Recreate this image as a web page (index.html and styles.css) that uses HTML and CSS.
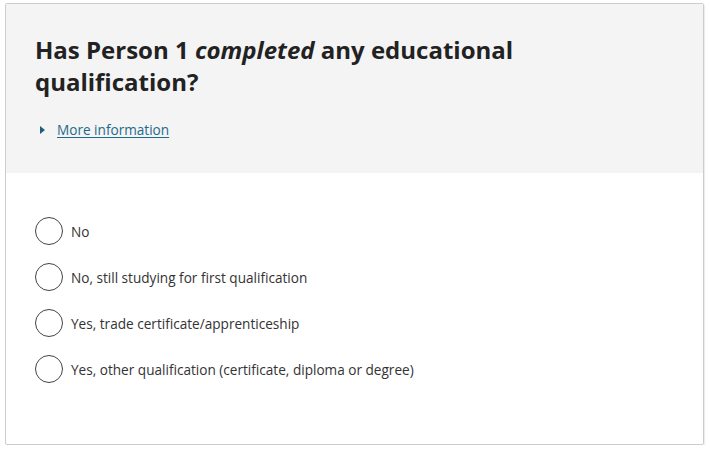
FILE: index.html
```html
<!DOCTYPE html>
<html>
<head>
<meta charset="utf-8">
<link rel="stylesheet" href="styles.css">
</head>
<body>
<div class="card">
  <div class="header">
    <h1 class="title">Has Person 1 <em>completed</em> any educational qualification?</h1>
    <div class="more">
      <svg class="tri" width="6" height="8" viewBox="0 0 6 8"><path d="M0 0 L5 4 L0 8 Z" fill="#1d5f7a"/></svg>
      <a class="link" href="#">More information</a>
    </div>
  </div>
  <div class="options">
    <label class="opt"><span class="radio"></span><span>No</span></label>
    <label class="opt"><span class="radio"></span><span>No, still studying for first qualification</span></label>
    <label class="opt"><span class="radio"></span><span>Yes, trade certificate/apprenticeship</span></label>
    <label class="opt"><span class="radio"></span><span>Yes, other qualification (certificate, diploma or degree)</span></label>
  </div>
</div>
</body>
</html>
```

FILE: styles.css
```css
html, body { margin: 0; padding: 0; background: #fff; }
body { padding: 3px 6px 0 5px; font-family: "Open Sans", "Noto Sans", sans-serif; color: #333; }
.card {
  border: 1px solid #cccccc;
  border-radius: 2px;
  box-shadow: 1px 1px 1px rgba(0,0,0,0.08);
  height: 442px;
  box-sizing: border-box;
  display: flex;
  flex-direction: column;
}
.header {
  background: #f4f4f4;
  height: 169px;
  box-sizing: border-box;
  padding: 30px 29px 0 29px;
}
.title {
  margin: 0;
  font-size: 24px;
  line-height: 32px;
  font-weight: 700;
  color: #222;
  width: 580px;
}
.title em { font-style: italic; }
.more { display: flex; align-items: center; gap: 11px; margin-top: 22px; padding-left: 5px; }
.link { color: #1f6a8a; font-size: 13.6px; text-decoration: underline; text-underline-offset: 2px; }
.options { padding: 44px 29px 0 29px; display: flex; flex-direction: column; gap: 18px; }
.opt { display: flex; align-items: center; gap: 8px; font-size: 13.6px; color: #333; height: 28px; }
.radio {
  width: 26px; height: 26px; border: 1px solid #444; border-radius: 50%; background: #fff; flex: none;
}
```
